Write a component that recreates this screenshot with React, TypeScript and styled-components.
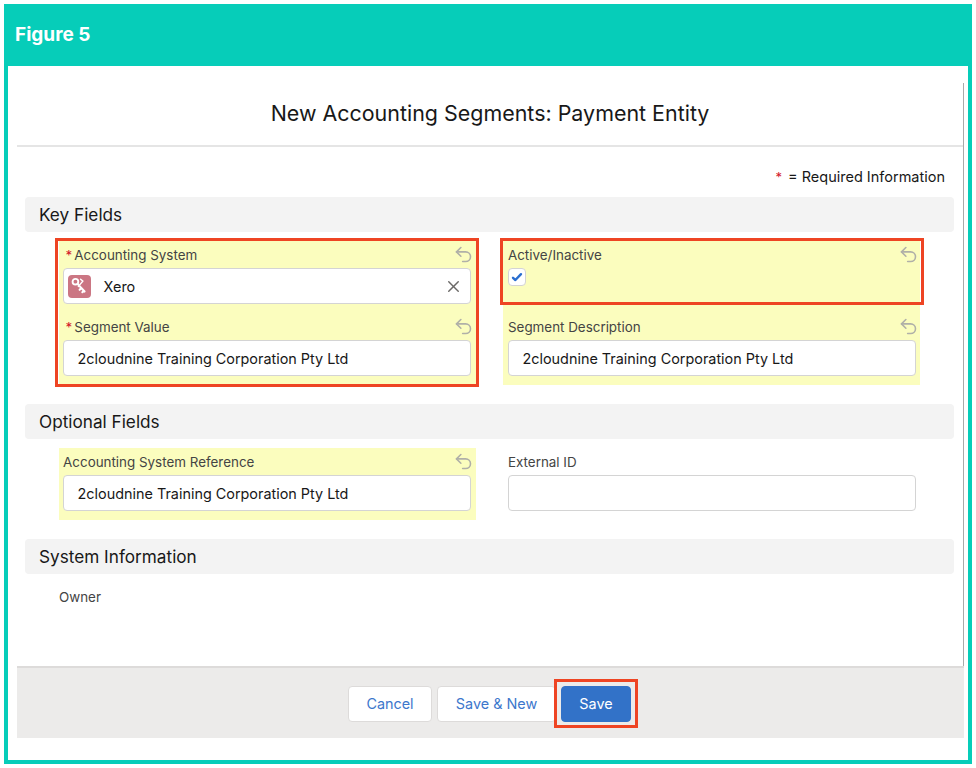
import styled, { createGlobalStyle } from "styled-components";
import { Undo2, X } from "lucide-react";

const GlobalStyle = createGlobalStyle`
  html, body {
    margin: 0;
    padding: 0;
    background: #ffffff;
    font-family: Inter, "Liberation Sans", sans-serif;
  }
`;

const Frame = styled.div`
  box-sizing: border-box;
  width: 968px;
  height: 760px;
  margin: 4px;
  border: 4px solid #06cdb9;
  display: flex;
  flex-direction: column;
`;

const FigureBar = styled.header`
  height: 58px;
  flex-shrink: 0;
  padding: 0 0 6px 7px;
  box-sizing: border-box;
  background: #06cdb9;
  display: flex;
  align-items: center;
  color: #ffffff;
  font-family: Inter, sans-serif;
  font-size: 19px;
  font-weight: 700;
`;

const Panel = styled.main`
  position: relative;
  width: 947px;
  margin-left: 9px;
  height: 672px;
  display: flex;
  flex-direction: column;

  &::after {
    content: "";
    position: absolute;
    top: 17px;
    bottom: 72px;
    right: 0;
    width: 1.5px;
    background: #a9a9a9;
  }
`;

const Title = styled.h1`
  margin: 0;
  height: 81px;
  flex-shrink: 0;
  box-sizing: border-box;
  padding-top: 15px;
  padding-right: 1px;
  border-bottom: 2px solid #e5e5e5;
  display: flex;
  align-items: center;
  justify-content: center;
  font-size: 21.45px;
  font-weight: 400;
  color: #181818;
`;

const RequiredNote = styled.div`
  height: 50px;
  flex-shrink: 0;
  padding: 0 19px 10px 0;
  box-sizing: border-box;
  display: flex;
  align-items: flex-end;
  justify-content: flex-end;
  gap: 6px;
  font-size: 14.5px;
  line-height: 20px;
  color: #181818;
`;

const Star = styled.span`
  color: #d3182b;
  font-size: 13px;
`;

const SectionHeader = styled.h2<{ $top?: number }>`
  margin: ${(p) => p.$top ?? 0}px 10px 9px 8px;
  height: 35px;
  flex-shrink: 0;
  box-sizing: border-box;
  padding-left: 14px;
  border-radius: 4px;
  background: #f3f3f3;
  display: flex;
  align-items: center;
  font-size: 17.2px;
  font-weight: 400;
  color: #181818;
`;

const Columns = styled.div`
  display: grid;
  grid-template-columns: 417px 417px;
  column-gap: 27.9px;
  margin-left: 41.6px;
`;

const Stack = styled.div`
  display: flex;
  flex-direction: column;
  position: relative;
`;

const RedBox = styled.span<{ $bottom: number }>`
  position: absolute;
  top: -3px;
  left: -3.5px;
  right: -3.5px;
  bottom: ${(p) => p.$bottom}px;
  border: 3.5px solid #ee4423;
  pointer-events: none;
`;

const FieldBlock = styled.div<{ $changed?: boolean }>`
  box-sizing: border-box;
  height: 72px;
  padding: 0 4.5px;
  background: ${(p) => (p.$changed ? "#fbfdbe" : "transparent")};
  display: flex;
  flex-direction: column;
`;

const LabelRow = styled.div`
  height: 27px;
  flex-shrink: 0;
  display: flex;
  align-items: center;
  justify-content: space-between;
  font-size: 13.4px;
  color: #444444;

  svg {
    color: #b0b0a8;
    margin: 0 -3px 0 0;
  }
`;

const LabelText = styled.span<{ $required?: boolean }>`
  padding-left: ${(p) => (p.$required ? 2.5 : 0)}px;

  &::before {
    content: ${(p) => (p.$required ? '"*"' : "none")};
    color: #d3182b;
    margin-right: 2px;
  }
`;

const InputBox = styled.div`
  box-sizing: border-box;
  height: 36px;
  padding: 0 13.5px;
  background: #ffffff;
  border: 1px solid #d4d4d4;
  border-radius: 4px;
  display: flex;
  align-items: center;
  font-size: 14.4px;
  color: #181818;
`;

const LookupBox = styled(InputBox)`
  padding: 0 7px 0 4px;
  gap: 12.5px;

  svg.clear {
    margin-left: auto;
    color: #6b6967;
  }
`;

const LookupIcon = styled.span`
  width: 23px;
  height: 23px;
  border-radius: 4px;
  background: #cb7683;
  display: flex;
  align-items: center;
  justify-content: center;
`;

const CheckBox = styled.span`
  box-sizing: border-box;
  width: 18px;
  height: 18px;
  background: #ffffff;
  border: 1px solid #d4d4d4;
  border-radius: 4px;
  display: flex;
  align-items: center;
  justify-content: center;
`;

const OwnerLabel = styled.div`
  margin: 5px 0 0 42px;
  font-size: 13.4px;
  line-height: 18px;
  color: #444444;
`;

const Footer = styled.footer`
  margin: auto 0 0 0;
  height: 72px;
  flex-shrink: 0;
  box-sizing: border-box;
  padding-left: 331px;
  padding-top: 18px;
  background: #ecebea;
  border-top: 2px solid #dddbda;
  display: flex;
  align-items: flex-start;
  gap: 5px;
`;

const Button = styled.button<{ $brand?: boolean; $width: number }>`
  position: relative;
  box-sizing: border-box;
  width: ${(p) => p.$width}px;
  height: 36px;
  padding: 0 0 1px;
  border-radius: 4px;
  border: 1px solid ${(p) => (p.$brand ? "#3272c8" : "#dddbda")};
  background: ${(p) => (p.$brand ? "#3272c8" : "#ffffff")};
  color: ${(p) => (p.$brand ? "#ffffff" : "#3d77cc")};
  font-family: inherit;
  font-size: 14.4px;
  cursor: pointer;
`;

const ButtonMark = styled.span`
  position: absolute;
  top: -8px;
  left: -8px;
  right: -8px;
  bottom: -7px;
  border: 3.5px solid #ee4423;
  pointer-events: none;
`;

const KeysIcon = () => (
  <svg width="21" height="21" viewBox="0 0 17 17" fill="none" stroke="#ffffff" strokeLinecap="round">
    <circle cx="5.2" cy="4.6" r="2.3" strokeWidth="1.5" />
    <path d="M6.9 6.4 L12.6 12.6 M10 9.8 L8.6 11.2 M12 11.9 L10.8 13.1" strokeWidth="1.7" />
    <path d="M9.4 2.6 L11.2 4.2 L7.6 8.4" strokeWidth="1.2" />
  </svg>
);

const TickIcon = () => (
  <svg width="12" height="12" viewBox="0 0 12 12" fill="none" stroke="#2a6ecf" strokeWidth="2.4" strokeLinecap="round" strokeLinejoin="round">
    <path d="M2 6.8 L4.4 9 L10 3.2" />
  </svg>
);

const UndoIcon = () => <Undo2 size={21} strokeWidth={1.8} />;

type FieldProps = {
  label: string;
  value?: string;
  required?: boolean;
  changed?: boolean;
};

const TextField = ({ label, value, required, changed }: FieldProps) => (
  <FieldBlock $changed={changed}>
    <LabelRow>
      <LabelText $required={required}>{label}</LabelText>
      {changed && <UndoIcon />}
    </LabelRow>
    <InputBox>{value}</InputBox>
  </FieldBlock>
);

const companyName = "2cloudnine Training Corporation Pty Ltd";

export default function App() {
  return (
    <>
      <GlobalStyle />
      <Frame>
        <FigureBar>Figure 5</FigureBar>
        <Panel>
          <Title>New Accounting Segments: Payment Entity</Title>
          <RequiredNote>
            <Star>*</Star>
            <span>= Required Information</span>
          </RequiredNote>

          <SectionHeader>Key Fields</SectionHeader>
          <Columns>
            <Stack>
              <FieldBlock $changed>
                <LabelRow>
                  <LabelText $required>Accounting System</LabelText>
                  <UndoIcon />
                </LabelRow>
                <LookupBox>
                  <LookupIcon>
                    <KeysIcon />
                  </LookupIcon>
                  Xero
                  <X className="clear" size={19} strokeWidth={1.8} />
                </LookupBox>
              </FieldBlock>
              <TextField label="Segment Value" value={companyName} required changed />
              <RedBox $bottom={-1.5} />
            </Stack>
            <Stack>
              <FieldBlock $changed>
                <LabelRow>
                  <LabelText>Active/Inactive</LabelText>
                  <UndoIcon />
                </LabelRow>
                <CheckBox>
                  <TickIcon />
                </CheckBox>
              </FieldBlock>
              <TextField label="Segment Description" value={companyName} changed />
              <RedBox $bottom={80} />
            </Stack>
          </Columns>

          <SectionHeader $top={19}>Optional Fields</SectionHeader>
          <Columns>
            <TextField label="Accounting System Reference" value={companyName} changed />
            <TextField label="External ID" />
          </Columns>

          <SectionHeader $top={19}>System Information</SectionHeader>
          <OwnerLabel>Owner</OwnerLabel>

          <Footer>
            <Button $width={84}>Cancel</Button>
            <Button $width={119}>Save &amp; New</Button>
            <Button $brand $width={70}>
              Save
              <ButtonMark />
            </Button>
          </Footer>
        </Panel>
      </Frame>
    </>
  );
}
